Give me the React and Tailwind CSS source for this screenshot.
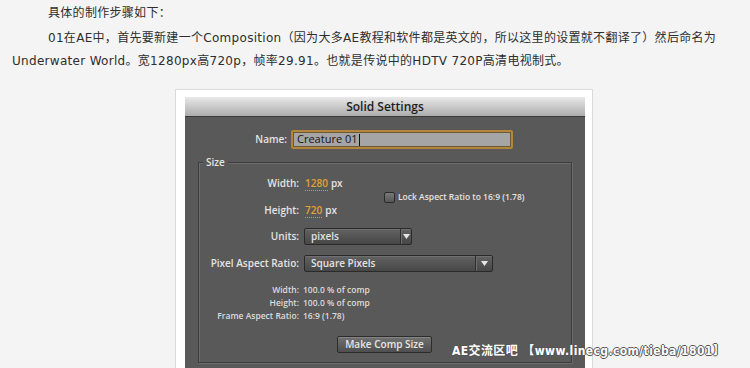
import React from 'react';

const pageFont = { fontFamily: '"DejaVu Sans", "Noto Sans CJK SC", sans-serif' };
const uiFont = { fontFamily: '"Open Sans", "DejaVu Sans", sans-serif' };

function Dropdown({ label, width, arrowWidth }) {
  return (
    <div
      className={`flex h-[17px] ${width} items-stretch rounded-[2px] border border-[#2a2a2a] bg-gradient-to-b from-[#626262] to-[#474747] shadow-[inset_0_1px_0_#707070]`}
    >
      <span className="flex-1 pl-[6px] text-[10px] leading-[15px] font-semibold text-[#e2e2e2]">{label}</span>
      <span
        className={`flex ${arrowWidth} items-center justify-center border-l border-[#2f2f2f] shadow-[inset_1px_0_0_#6c6c6c]`}
      >
        <svg width="7" height="5" viewBox="0 0 7 5">
          <path d="M0 0h7L3.5 5z" fill="#e6e6e6" />
        </svg>
      </span>
    </div>
  );
}

function Row({ label, children, className = '' }) {
  return (
    <div className={`flex items-center ${className}`}>
      <span className="w-[100px] shrink-0 text-right">{label}</span>
      {children}
    </div>
  );
}

export default function App() {
  return (
    <div className="relative h-[368px] overflow-hidden bg-[#f4f4f4]">
      <div
        className="px-3 pt-[2px] text-[12px] leading-[23px] tracking-[0.3px] text-[#2e2e2e] [text-spacing-trim:space-all]"
        style={pageFont}
      >
        <p className="indent-[36px] whitespace-nowrap">具体的制作步骤如下：</p>
        <p className="mt-[2px] indent-[36px] whitespace-nowrap">
          01在AE中，首先要新建一个Composition（因为大多AE教程和软件都是英文的，所以这里的设置就不翻译了）然后命名为
          <br />
          Underwater World。宽1280px高720p，帧率29.91。也就是传说中的HDTV 720P高清电视制式。
        </p>
      </div>

      <div className="ml-[175px] mt-[16px] w-[418px] border border-[#dadada] bg-white pl-[9px] pt-[7px] pb-[8px]">
        <div className="w-[400px] bg-[#595959]" style={uiFont}>
          <div className="flex h-[20px] items-center justify-center border-b border-[#3a3a3a] bg-gradient-to-b from-[#e9e9e9] to-[#acacac] text-[12px] font-semibold text-[#1e1e1e]">
            Solid Settings
          </div>

          <div className="pt-[13px] pb-[20px] text-[10px] font-semibold text-[#e4e4e4]">
            <div className="flex items-center">
              <span className="w-[102px] text-right">Name:</span>
              <div className="ml-[4px] flex h-[19px] w-[222px] items-center rounded-[2px] border-2 border-[#b3863a] bg-[#a5a5a5] pl-[4px] text-[11px] font-normal text-[#151515] shadow-[inset_0_0_0_1px_#6a5a3a]">
                Creature 01
                <span className="ml-[1px] h-[12px] w-px bg-[#111]" />
              </div>
            </div>

            <div className="relative ml-[13px] mt-[13px] w-[374px] border border-[#3e3e3e] pt-[7px] pb-[9px] shadow-[inset_1px_1px_0_#6b6b6b,1px_1px_0_#6b6b6b]">
              <span className="absolute left-[4px] top-[-8px] bg-[#595959] px-[3px] text-[10px] leading-[14px]">Size</span>

              <div className="flex items-center">
                <div className="w-[185px]">
                  <Row label="Width:" className="h-[27px]">
                    <span className="ml-[6px] border-b border-dotted border-[#d59a34] leading-[13px] text-[#e3a234]">1280</span>
                    <span className="ml-[3px]">px</span>
                  </Row>
                  <Row label="Height:" className="h-[27px]">
                    <span className="ml-[6px] border-b border-dotted border-[#d59a34] leading-[13px] text-[#e3a234]">720</span>
                    <span className="ml-[3px]">px</span>
                  </Row>
                </div>
                <div className="flex items-center">
                  <span className="h-[11px] w-[11px] rounded-[2px] border border-[#2b2b2b] bg-gradient-to-b from-[#7a7a7a] to-[#565656]" />
                  <span className="ml-[3px] text-[8.5px]">Lock Aspect Ratio to 16:9 (1.78)</span>
                </div>
              </div>

              <Row label="Units:" className="mt-[4px] h-[17px]">
                <div className="ml-[5px]">
                  <Dropdown label="pixels" width="w-[108px]" arrowWidth="w-[11px]" />
                </div>
              </Row>
              <Row label="Pixel Aspect Ratio:" className="mt-[10px] h-[17px]">
                <div className="ml-[5px]">
                  <Dropdown label="Square Pixels" width="w-[189px]" arrowWidth="w-[17px]" />
                </div>
              </Row>

              <div className="mt-[12px] text-[8.5px] text-[#dcdcdc]">
                <Row label="Width:" className="h-[13px]">
                  <span className="ml-[4px]">100.0 % of comp</span>
                </Row>
                <Row label="Height:" className="h-[13px]">
                  <span className="ml-[4px]">100.0 % of comp</span>
                </Row>
                <Row label="Frame Aspect Ratio:" className="h-[13px]">
                  <span className="ml-[4px]">16:9 (1.78)</span>
                </Row>
              </div>

              <div className="ml-[138px] mt-[13px] flex h-[17px] w-[95px] items-center justify-center rounded-[2px] border border-[#2c2c2c] bg-gradient-to-b from-[#717171] to-[#4f4f4f] text-[10px] text-[#e6e6e6] shadow-[inset_0_1px_0_#848484]">
                Make Comp Size
              </div>
            </div>
          </div>
        </div>
      </div>

      <div
        className="absolute left-[452px] top-[343px] whitespace-nowrap text-[12px] font-bold leading-[16px] tracking-[0.4px] text-white [text-shadow:1px_0_0_#555,-1px_0_0_#555,0_1px_0_#555,0_-1px_0_#555]"
        style={{ fontFamily: '"DejaVu Sans Condensed", "Liberation Sans Narrow", "Noto Sans CJK SC", sans-serif' }}
      >
        AE交流区吧 【www.linecg.com/tieba/1801】
      </div>
    </div>
  );
}
